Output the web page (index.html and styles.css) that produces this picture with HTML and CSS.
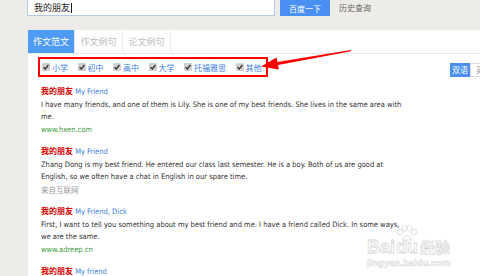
FILE: index.html
```html
<!DOCTYPE html>
<html lang="zh-CN">
<head>
<meta charset="utf-8">
<title>我的朋友 - 作文范文</title>
<link rel="stylesheet" href="styles.css">
</head>
<body>
<header class="top">
  <div class="search"><span class="query">我的朋友</span><span class="caret"></span></div>
  <button class="go">百度一下</button>
  <a class="history">历史查询</a>
</header>
<main class="main">
  <nav class="tabs">
    <span class="tab active">作文范文</span>
    <span class="tab">作文例句</span>
    <span class="tab">论文例句</span>
  </nav>
  <div class="filterbar">
    <div class="filters">
      <label class="opt"><svg class="cb" viewBox="0 0 8 8"><rect width="8" height="8" rx="1"/><path d="M1.6 4.2 L3.3 6 L6.4 2"/></svg>小学</label>
      <label class="opt"><svg class="cb" viewBox="0 0 8 8"><rect width="8" height="8" rx="1"/><path d="M1.6 4.2 L3.3 6 L6.4 2"/></svg>初中</label>
      <label class="opt"><svg class="cb" viewBox="0 0 8 8"><rect width="8" height="8" rx="1"/><path d="M1.6 4.2 L3.3 6 L6.4 2"/></svg>高中</label>
      <label class="opt"><svg class="cb" viewBox="0 0 8 8"><rect width="8" height="8" rx="1"/><path d="M1.6 4.2 L3.3 6 L6.4 2"/></svg>大学</label>
      <label class="opt"><svg class="cb" viewBox="0 0 8 8"><rect width="8" height="8" rx="1"/><path d="M1.6 4.2 L3.3 6 L6.4 2"/></svg>托福雅思</label>
      <label class="opt"><svg class="cb" viewBox="0 0 8 8"><rect width="8" height="8" rx="1"/><path d="M1.6 4.2 L3.3 6 L6.4 2"/></svg>其他</label>
    </div>
    <div class="lang"><span class="lang-btn on">双语</span><span class="lang-btn">英</span></div>
  </div>
  <ul class="results">
    <li class="item">
      <div class="title"><span class="cn">我的朋友</span> <span class="en">My Friend</span></div>
      <p class="text">I have many friends, and one of them is Lily. She is one of my best friends. She lives in the same area with me.</p>
      <div class="link">www.hxen.com</div>
    </li>
    <li class="item">
      <div class="title"><span class="cn">我的朋友</span> <span class="en">My Friend</span></div>
      <p class="text">Zhang Dong is my best friend. He entered our class last semester. He is a boy. Both of us are good at English, so we often have a chat in English in our spare time.</p>
      <div class="src">来自互联网</div>
    </li>
    <li class="item">
      <div class="title"><span class="cn">我的朋友</span> <span class="en">My Friend, Dick</span></div>
      <p class="text">First, I want to tell you something about my best friend and me. I have a friend called Dick. In some ways, we are the same.</p>
      <div class="link">www.adreep.cn</div>
    </li>
    <li class="item">
      <div class="title"><span class="cn">我的朋友</span> <span class="en">My friend</span></div>
    </li>
  </ul>
</main>
<svg class="arrow" viewBox="0 0 100 30"><polygon points="6,21.5 21.6,12.6 22.4,17 95.9,5 96.1,6.2 23,20 23.8,24.4"/></svg>
<div class="watermark">
  <div class="wm-logo"><span class="wm-bai">Bai</span><span class="wm-du">du<svg class="paw" viewBox="0 0 24 16"><ellipse cx="5" cy="7" rx="2.6" ry="3.2"/><ellipse cx="9.5" cy="3.2" rx="2.4" ry="3"/><ellipse cx="14.5" cy="3.2" rx="2.4" ry="3"/><ellipse cx="19" cy="7" rx="2.6" ry="3.2"/><path d="M7 15 Q12 6 17 15 Z"/></svg></span><span class="wm-jy">经验</span></div>
  <div class="wm-url">jingyan.baidu.com</div>
</div>
</body>
</html>
```
FILE: styles.css
```css
* { box-sizing: border-box; }
html, body { margin: 0; }
body {
  width: 480px;
  height: 276px;
  overflow: hidden;
  position: relative;
  background: #edece8;
  font-family: "Liberation Sans", "Noto Sans CJK SC", sans-serif;
  color: #333;
}
.top {
  height: 30px;
  display: flex;
  align-items: flex-start;
  padding-left: 27px;
}
.search {
  width: 248px;
  height: 16px;
  background: #fff;
  border: 1px solid #b5c9e8;
  border-top: none;
  display: flex;
  align-items: center;
  padding-left: 6px;
  font-family: "Noto Sans CJK SC", sans-serif;
  font-size: 9px;
  color: #222;
}
.caret { width: 1px; height: 10px; background: #222; margin-left: 1px; }
.go {
  margin-left: 5px;
  width: 50px;
  height: 16px;
  padding: 0;
  border: 0;
  background: #4a90f2;
  color: #fff;
  font-family: "Noto Sans CJK SC", sans-serif;
  font-size: 8px;
}
.history {
  margin-left: 9px;
  line-height: 16px;
  font-family: "Noto Sans CJK SC", sans-serif;
  font-size: 8px;
  color: #666;
}
.main {
  margin-left: 28px;
  height: 246px;
  background: #fff;
}
.tabs {
  display: flex;
  height: 24px;
  border-bottom: 1px solid #e8e8e8;
}
.tab {
  width: 48px;
  border-right: 1px solid #ececec;
  text-align: center;
  line-height: 23px;
  font-family: "Noto Sans CJK SC", sans-serif;
  font-size: 9px;
  color: #bdbdbd;
}
.tab.active { width: 47px; background: #4d9bf2; color: #fff; border-right-color: #e6e6e6; }
.filterbar {
  display: flex;
  align-items: flex-end;
  width: 452px;
  margin: 3px 0 0 10px;
}
.filters {
  display: flex;
  align-items: center;
  flex-shrink: 0;
  width: 230px;
  height: 20px;
  padding-left: 2px;
  border: 2px solid #f00;
}
.opt {
  display: flex;
  align-items: center;
  flex-shrink: 0;
  white-space: nowrap;
  margin-right: 9.5px;
  font-family: "Noto Sans CJK SC", sans-serif;
  font-size: 8px;
  color: #3b7ddf;
}
.cb { width: 8px; height: 8px; margin-right: 2px; flex-shrink: 0; }
.cb rect { fill: #cfcfcf; }
.cb path { fill: none; stroke: #333; stroke-width: 1.3; }
.lang { margin-left: auto; display: flex; flex-shrink: 0; }
.lang-btn {
  width: 20px;
  height: 14px;
  line-height: 12px;
  text-align: center;
  white-space: nowrap;
  border: 1px solid #ddd;
  font-family: "Noto Sans CJK SC", sans-serif;
  font-size: 8px;
  color: #999;
}
.lang-btn.on { background: #4a8ff0; border-color: #4a8ff0; color: #fff; }
.results {
  list-style: none;
  margin: 7px 0 0;
  padding: 0 0 0 13px;
}
.item { margin-bottom: 7px; }
.title { line-height: 14px; font-family: "DejaVu Sans", sans-serif; font-stretch: condensed; font-size: 7.5px; }
.cn { font-family: "Noto Sans CJK SC", sans-serif; font-size: 8px; font-weight: bold; color: #d50000; }
.en { color: #3b7de0; }
.text {
  margin: 0;
  width: 364px;
  font-family: "DejaVu Sans", sans-serif;
  font-stretch: condensed;
  font-size: 7.5px;
  line-height: 12px;
  color: #333;
}
.link { line-height: 14px; font-family: "DejaVu Sans", sans-serif; font-stretch: condensed; font-size: 7.5px; color: #3a9a3a; }
.src { line-height: 14px; font-family: "Noto Sans CJK SC", sans-serif; font-size: 7.5px; color: #999; }
.arrow {
  position: absolute;
  left: 255px;
  top: 45px;
  width: 100px;
  height: 30px;
}
.arrow polygon { fill: #f00; }
.watermark {
  position: absolute;
  left: 367px;
  top: 232px;
  width: 90px;
  color: #fff;
}
.wm-logo { display: flex; align-items: flex-end; height: 24px; }
.wm-bai, .wm-du {
  font-family: "Liberation Sans", sans-serif;
  font-weight: bold;
  font-size: 18px;
  line-height: 18px;
  -webkit-text-stroke: 0.8px #d8d8d8;
}
.wm-du { position: relative; margin-left: 1px; }
.paw {
  position: absolute;
  left: -1px;
  top: -13px;
  width: 24px;
  height: 16px;
}
.paw ellipse, .paw path { fill: #fff; stroke: #d8d8d8; stroke-width: 0.8; }
.wm-jy {
  margin-left: 2px;
  font-family: "Noto Sans CJK SC", sans-serif;
  font-weight: bold;
  font-size: 15px;
  line-height: 18px;
  -webkit-text-stroke: 0.7px #d8d8d8;
}
.wm-url {
  margin-top: 1px;
  font-family: "Liberation Sans", sans-serif;
  font-weight: bold;
  font-size: 9.5px;
  line-height: 11px;
  -webkit-text-stroke: 0.6px #dcdcdc;
}
```
